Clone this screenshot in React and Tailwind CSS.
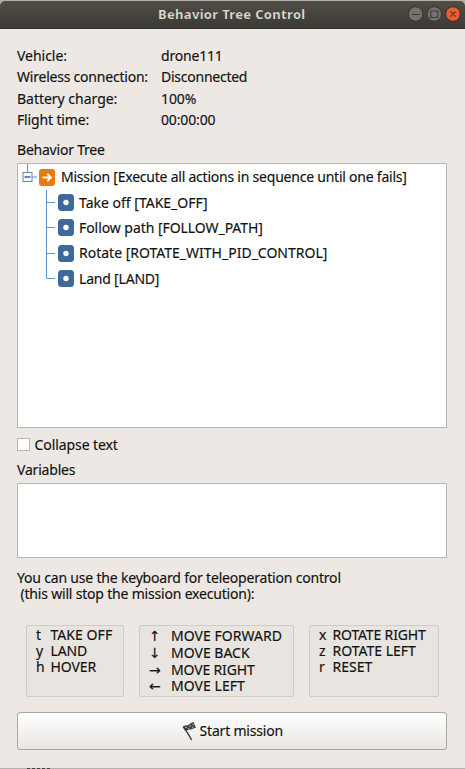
import React from "react";

const status = [
  ["Vehicle:", "drone111", "tracking-[-0.03px]", "tracking-[-0.2px]"],
  ["Wireless connection:", "Disconnected", "tracking-[-0.22px]", "tracking-[-0.25px]"],
  ["Battery charge:", "100%", "tracking-[-0.02px]", "tracking-[-0.1px]"],
  ["Flight time:", "00:00:00", "tracking-[-0.15px]", "tracking-[-0.15px]"],
];

const actions = [
  ["Take off [TAKE_OFF]", "tracking-[0px]"],
  ["Follow path [FOLLOW_PATH]", "tracking-[-0.06px]"],
  ["Rotate [ROTATE_WITH_PID_CONTROL]", "tracking-[0px]"],
  ["Land [LAND]", "tracking-[-0.2px]"],
];

function TitleBar() {
  return (
    <header className="mt-px grid h-7 grid-cols-[1fr_auto_1fr] items-center rounded-t-[5px] border-b border-[#33322e] bg-linear-to-b from-[#504e46] to-[#3b3a35] pr-[3.500px] pl-[2px]">
      <span />
      <h1 className="pb-[2px] text-[13px] leading-[24px] font-bold tracking-[0.33px] text-[#dfdbd2]">Behavior Tree Control</h1>
      <svg className="mb-[1px] justify-self-end" width="54" height="18" viewBox="0 0 54 18" fill="none">
        <circle cx="7.6" cy="9" r="7.3" fill="#74736b" stroke="#34332f" />
        <circle cx="26.3" cy="9" r="7.3" fill="#74736b" stroke="#34332f" />
        <circle cx="45" cy="9" r="7.3" fill="#ec5b31" stroke="#442d24" />
        <path d="M3.800 9.5h8M22.800 6h7v6.500h-7zM42.400 6.500l5.200 5.200M47.600 6.500l-5.200 5.200" stroke="#3c3b37" strokeWidth="1.1" />
      </svg>
    </header>
  );
}

function SequenceIcon() {
  return (
    <svg className="shrink-0" width="16" height="17" viewBox="0 0 16 17" fill="none">
      <rect width="16" height="17" rx="3" fill="#eb7a0c" />
      <path d="M3.500 8.500h8M8.300 4.800l3.700 3.700L8.300 12.200" stroke="#fff" strokeWidth="1.800" />
    </svg>
  );
}

function ActionIcon() {
  return (
    <svg className="shrink-0" width="16" height="17" viewBox="0 0 16 17">
      <rect width="16" height="17" rx="3.500" fill="#3d6a9b" />
      <circle cx="8" cy="8.500" r="2.700" fill="#fff" />
    </svg>
  );
}

function Branch({ last }) {
  return (
    <svg className="shrink-0 overflow-visible" width="12" height="25.300" viewBox="0 0 12 25.300" fill="none" stroke="#5b91d3">
      <path d={last ? "M2.500 0v12.500h8.500" : "M2.500 0v26M2.500 12.500h8.500"} />
    </svg>
  );
}

function FlagIcon() {
  return (
    <svg width="15" height="20" viewBox="0 0 15 20" fill="none">
      <path d="M2 6L9.700 19" stroke="#333" strokeWidth="1.400" />
      <path d="M.500 6C3 3.500 5 5 7 3.500S9.500 1.500 11.500 1L14 7C11 6.500 11 8.500 8.500 8.500S5 9 3.500 10.500z" fill="#404040" />
      <path d="M3 6l1.600-.6.500 1.200-1.500.6zM7.200 4.700l1.500-.8.500 1.200-1.500.8zM10.300 2.900h1.200l.5 1.200h-1.200zM5.800 7.500l1.400-.5.300.8-1.300.2zM9.800 6l1.500-.5.300.8-1.300.6z" fill="#bbb8b4" />
    </svg>
  );
}

function Keys({ keys, className, keyClass, rowClass }) {
  return (
    <div className={"h-[72px] rounded-[2px] border border-[#cfcbc6] bg-[#e8e4df] " + className}>
      {keys.map(([key, name, track]) => (
        <div key={name} className={"flex " + rowClass}>
          <span className={keyClass}>{key}</span>
          <span className={track}>{name}</span>
        </div>
      ))}
    </div>
  );
}

export default function App() {
  return (
    <div className="flex h-[769px] w-[465px] flex-col overflow-hidden bg-[#b3b0ac] font-['Noto_Sans','Open_Sans',sans-serif] text-[14px] leading-[21.500px] whitespace-pre text-[#111] [-webkit-text-stroke:0.150px_#111]">
      <TitleBar />
      <main className="flex h-[739px] shrink-0 flex-col bg-[#ede8e3] px-[17px] pt-[15.500px]">
        <dl className="grid grid-cols-[144px_1fr]">
          {status.map(([label, value, a, b]) => (
            <React.Fragment key={label}>
              <dt className={a}>{label}</dt>
              <dd className={b}>{value}</dd>
            </React.Fragment>
          ))}
        </dl>
        <h2 className="mt-[8.500px] tracking-[-0.22px]">Behavior Tree</h2>
        <section className="mt-[2.500px] h-[265px] w-[430px] shrink-0 border border-[#b9b6b2] bg-white">
          <div className="flex h-[26px] items-center pl-1">
            <svg className="mr-[2px] shrink-0" width="15" height="26" viewBox="0 0 15 26" fill="none">
              <path d="M5.500 0v8M10 13h5" stroke="#5b91d3" />
              <rect x="1" y="8.500" width="9" height="9" stroke="#5f86b5" />
              <path d="M2.500 13h6" stroke="#2f65ab" strokeWidth="1.500" />
            </svg>
            <SequenceIcon />
            <span className="ml-[6px] tracking-[-0.225px]">Mission [Execute all actions in sequence until one fails]</span>
          </div>
          {actions.map(([name, track], i) => (
            <div key={name} className="flex h-[25.300px] items-center pl-[26px]">
              <Branch last={i === 3} />
              <span className="ml-[1.500px] flex items-center gap-[5.500px]">
                <ActionIcon />
                <span className={track}>{name}</span>
              </span>
            </div>
          ))}
        </section>
        <label className="mt-[6px] flex items-center gap-[4.500px]">
          <span className="size-[13px] border border-[#b9b6b2] bg-white" />
          <span className="tracking-[-0.08px]">Collapse text</span>
        </label>
        <h2 className="mt-[3.500px] tracking-[-0.2px]">Variables</h2>
        <section className="mt-[2.500px] h-[75px] w-[430px] shrink-0 border border-[#b9b6b2] bg-white" />
        <p className="mt-[12px] leading-[16px]">
          <span className="block tracking-[-0.19px]">You can use the keyboard for teleoperation control</span>
          <span className="block tracking-[-0.19px]"> (this will stop the mission execution):</span>
        </p>
        <div className="mt-[23px] flex pl-[9px]">
          <Keys
            className="w-[98px] pt-[1px] pl-[9px]"
            rowClass="leading-[16px]"
            keyClass="w-[14.500px]"
            keys={[["t", "TAKE OFF", "tracking-[0.05px]"], ["y", "LAND", "tracking-[-0.1px]"], ["h", "HOVER", "tracking-[-0.1px]"]]}
          />
          <Keys
            className="ml-[15px] w-[155px] pt-[2px] pl-[9px]"
            rowClass="leading-[16.800px]"
            keyClass="w-[22px] font-['DejaVu_Sans'] text-[14px]"
            keys={[["↑", "MOVE FORWARD", "tracking-[0.04px]"], ["↓", "MOVE BACK", "tracking-[0px]"], ["→", "MOVE RIGHT", "tracking-[-0.15px]"], ["←", "MOVE LEFT", "tracking-[0.05px]"]]}
          />
          <Keys
            className="ml-[15px] w-[130px] pt-[1px] pl-[9px]"
            rowClass="leading-[16px]"
            keyClass="w-[13.500px]"
            keys={[["x", "ROTATE RIGHT", "tracking-[-0.16px]"], ["z", "ROTATE LEFT", "tracking-[0px]"], ["r", "RESET", "tracking-[0px]"]]}
          />
        </div>
        <button className="mt-[15px] flex h-[38px] w-[430px] shrink-0 items-center justify-center gap-[2.500px] rounded-[3px] border border-[#aaa7a3] bg-linear-to-b from-white to-[#e9e6e2] pl-[1px]">
          <FlagIcon />
          <span className="tracking-[-0.2px]">Start mission</span>
        </button>
      </main>
      <footer className="flex h-px shrink-0 pl-[27px]">
        <span className="w-[23px] border-t border-dashed border-[#444]" />
      </footer>
    </div>
  );
}
